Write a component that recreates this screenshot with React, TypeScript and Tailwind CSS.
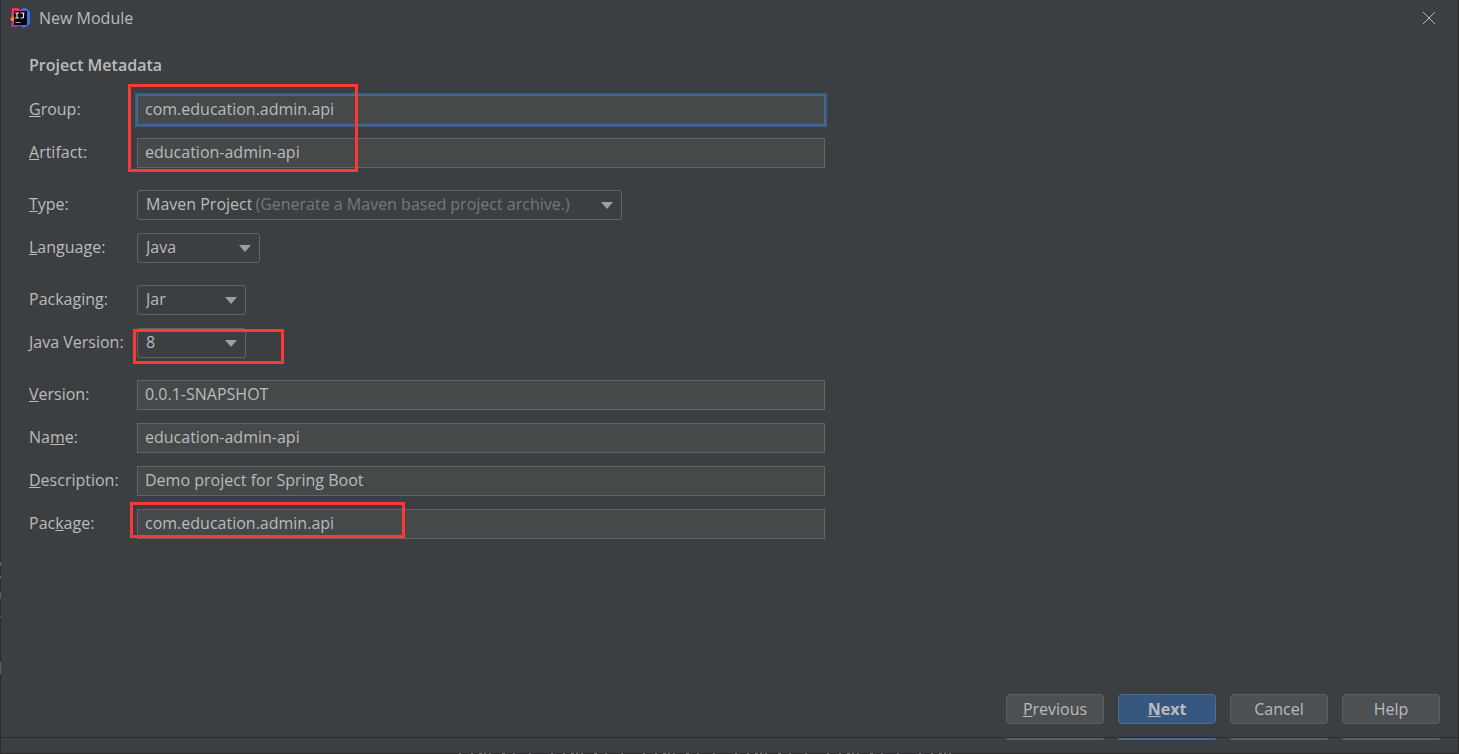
import { ReactNode } from 'react';

interface RowProps {
  id: string;
  label: ReactNode;
  children: ReactNode;
}

interface TextRowProps {
  id: string;
  label: ReactNode;
  value: string;
  active?: boolean;
}

interface SelectRowProps {
  id: string;
  label: ReactNode;
  value: string;
  width: string;
  hint?: string;
}

const Row = ({ id, label, children }: RowProps) => (
  <div className="flex h-[30px] items-center">
    <label htmlFor={id} className="w-27 shrink-0 pb-0.5 whitespace-nowrap">
      {label}
    </label>
    {children}
  </div>
);

const TextRow = ({ id, label, value, active }: TextRowProps) => (
  <Row id={id} label={label}>
    <input
      id={id}
      type="text"
      defaultValue={value}
      className={`h-[30px] min-w-0 flex-1 border bg-[#45494a] px-[7px] pb-0.5 outline-none ${
        active ? 'border-[#466d94] ring-2 ring-[#3d6185]' : 'border-[#646464]'
      }`}
    />
  </Row>
);

const SelectRow = ({ id, label, value, width, hint }: SelectRowProps) => (
  <Row id={id} label={label}>
    <div className={`relative flex h-[30px] items-center rounded-[3px] border border-[#646464] ${width}`}>
      <select
        id={id}
        className={`h-7 appearance-none bg-transparent pb-0.5 pl-2 outline-none ${hint ? 'field-sizing-content' : 'w-full'}`}
      >
        <option>{value}</option>
      </select>
      {hint && <span className="ml-[3px] pb-0.5 whitespace-nowrap text-[#787878]">{hint}</span>}
      <svg viewBox="0 0 12 7" className="pointer-events-none absolute right-2 h-[7px] w-3 fill-[#9da0a2]">
        <path d="M0 0h12L6 7z" />
      </svg>
    </div>
  </Row>
);

const Logo = () => (
  <svg viewBox="0 0 20 20" className="h-5 w-5">
    <path d="M2 0h6l4 4-4 8-7-2z" fill="#fe2d62" />
    <path d="M0 11l4-3 3 5-4 2z" fill="#fb8428" />
    <path d="M2 14l3-3 6 6-5 2H1z" fill="#b43597" />
    <path d="M11 1l5-1 4 4v12l-6 4-5-3z" fill="#3f6df0" />
    <path d="M9 4l5-4 3 3-2 3z" fill="#7b52dc" />
    <path d="M4 3h13v14H4z" fill="#050505" />
    <path d="M5 5h4M7 5v5M5 10h4M10.500 5h4M13.500 5v4q0 1-1 1h-2" fill="none" stroke="#e8e8e8" strokeWidth="1.200" />
    <path d="M5.500 14.500h5" stroke="#a8a8a8" />
  </svg>
);

export default function App() {
  const button = 'h-[30px] w-[98px] rounded border border-[#5e6060] bg-[#4c5052]';

  return (
    <div className="relative flex min-h-screen flex-col border-x border-b border-[#292b2c] bg-[#3c3f41] font-['Open_Sans',sans-serif] text-base leading-6 text-[#bbbbbb]">
      <header className="flex h-9 items-center pr-[22px] pl-[9px]">
        <Logo />
        <h1 className="ml-[9px]">New Module</h1>
        <button aria-label="Close" className="ml-auto">
          <svg viewBox="0 0 14 14" className="h-3.5 w-3.5 stroke-[#bbbbbb]">
            <path d="M1 1l12 12M13 1L1 13" />
          </svg>
        </button>
      </header>

      <main className="flex-1 pt-[17px] pl-7">
        <h2 className="font-semibold">Project Metadata</h2>
        <form className="mt-[18px] flex w-[796px] max-w-full flex-col gap-[22px]">
          <div className="relative flex flex-col gap-[13px]">
            <TextRow id="group" label={<><u>G</u>roup:</>} value="com.education.admin.api" active />
            <TextRow id="artifact" label={<><u>A</u>rtifact:</>} value="education-admin-api" />
            <div className="pointer-events-none absolute -top-[11px] left-[99px] h-[88px] w-[230px] border-3 border-[#fe3737]" />
          </div>

          <div className="flex flex-col gap-[13px]">
            <SelectRow
              id="type"
              label={<><u>T</u>ype:</>}
              value="Maven Project"
              hint="(Generate a Maven based project archive.)"
              width="w-[485px]"
            />
            <SelectRow id="language" label={<><u>L</u>anguage:</>} value="Java" width="w-[123px]" />
          </div>

          <div className="relative flex flex-col gap-[13px]">
            <SelectRow id="packaging" label={<>Packa<u>g</u>ing:</>} value="Jar" width="w-[109px]" />
            <SelectRow id="java-version" label={<><u>J</u>ava Version:</>} value="8" width="w-[109px]" />
            <div className="pointer-events-none absolute top-11 left-[104px] h-[35px] w-[151px] border-3 border-[#fe3737]" />
          </div>

          <div className="relative flex flex-col gap-[13px]">
            <TextRow id="version" label={<><u>V</u>ersion:</>} value="0.0.1-SNAPSHOT" />
            <TextRow id="name" label={<>Na<u>m</u>e:</>} value="education-admin-api" />
            <TextRow id="description" label={<><u>D</u>escription:</>} value="Demo project for Spring Boot" />
            <TextRow id="package" label={<>Pac<u>k</u>age:</>} value="com.education.admin.api" />
            <div className="pointer-events-none absolute bottom-px left-[101px] h-9 w-[275px] border-3 border-[#fe3737]" />
          </div>
        </form>
      </main>

      <footer>
        <div className="flex justify-end gap-3.5 pr-[18px] pb-[13px]">
          <button className={button}><u>P</u>revious</button>
          <button className="h-[30px] w-[98px] rounded border border-[#4c708c] bg-[#365880] font-bold"><u>N</u>ext</button>
          <button className={button}>Cancel</button>
          <button className={button}>Help</button>
        </div>
        {/* lower edge of the dialog behind */}
        <div className="flex h-4 justify-end gap-3.5 border-t border-[#292b2c] pr-[18px]">
          <div className="h-0.5 w-[98px] rounded-b bg-[#5e6060]" />
          <div className="h-0.5 w-[98px] rounded-b bg-[#466d94]" />
          <div className="h-0.5 w-[98px] rounded-b bg-[#5e6060]" />
          <div className="h-0.5 w-[98px] rounded-b bg-[#5e6060]" />
        </div>
      </footer>

      {/* tops of the editor text that shows under the dialog */}
      <svg className="pointer-events-none absolute -bottom-px left-[456px] h-px w-[496px] stroke-[#77716b]">
        <path d="M2 .5h494" strokeDasharray="2 10 2 6 3 2 2 3 2 11 3 8 2 14 2 20" />
      </svg>
      <svg className="pointer-events-none absolute top-[560px] -left-px h-[120px] w-px">
        <path d="M.5 2v4M.5 16v3M.5 56v1" stroke="#5f6467" />
        <path d="M.5 32v7M.5 102v12" stroke="#6f5a45" />
      </svg>
    </div>
  );
}
